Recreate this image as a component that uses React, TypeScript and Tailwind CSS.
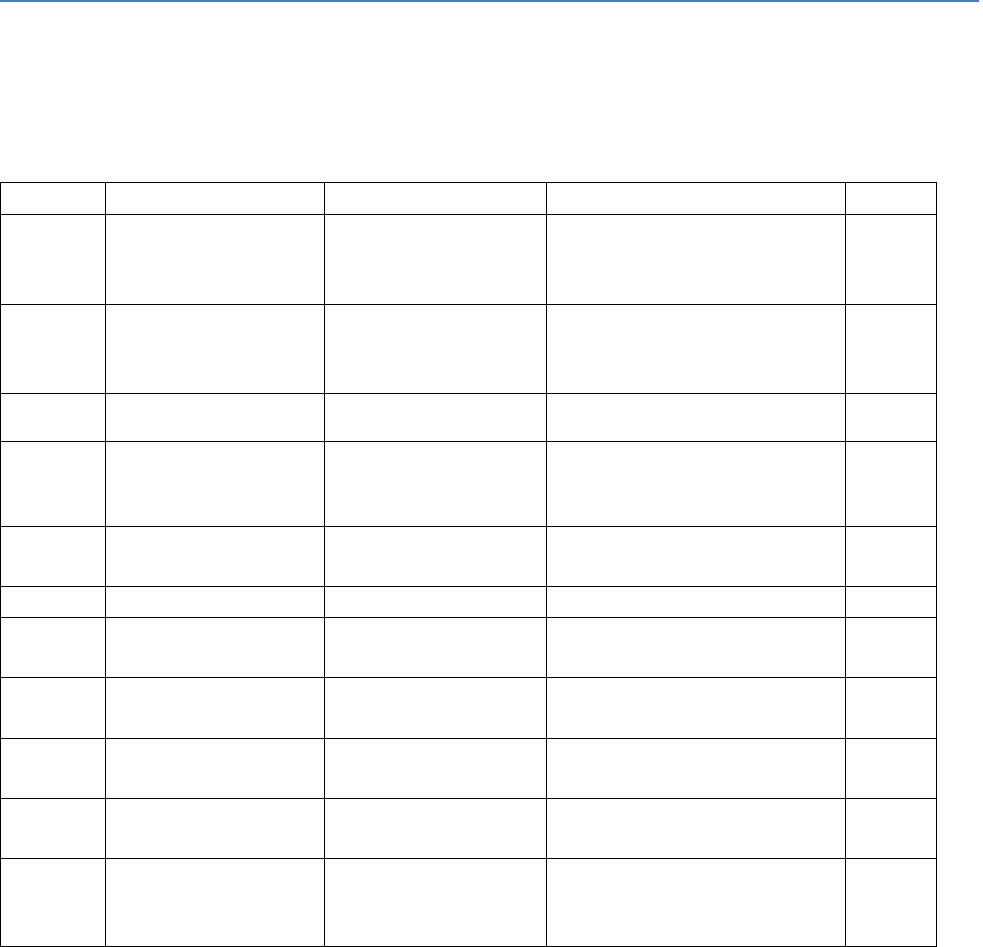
const colWidths = ['w-[105px]', 'w-[219px]', 'w-[222px]', 'w-[299px]', 'w-[91px]'];

const rowHeights = [
  'h-[32px]',
  'h-[90px]',
  'h-[89px]',
  'h-[48px]',
  'h-[85px]',
  'h-[60px]',
  'h-[31px]',
  'h-[60px]',
  'h-[61px]',
  'h-[60px]',
  'h-[60px]',
  'h-[88px]',
];

const App = () => {
  return (
    <div className="min-h-screen bg-white font-['Liberation_Sans',sans-serif]">
      <div className="w-[979px] h-[2px] bg-[#4a7fbd]" />
      <div className="mt-[180px] w-[937px] border-r border-b border-black">
        {rowHeights.map((h, i) => (
          <div key={i} className={`flex ${h}`}>
            {colWidths.map((w, j) => (
              <div key={j} className={`${w} shrink-0 border-l border-t border-black`} />
            ))}
          </div>
        ))}
      </div>
    </div>
  );
};

export default App;
